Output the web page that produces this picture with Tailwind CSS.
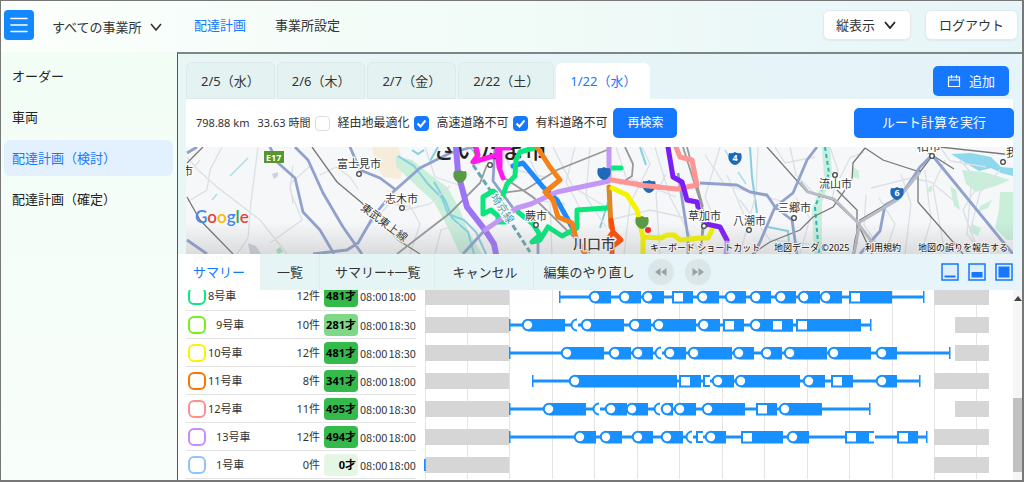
<!DOCTYPE html>
<html lang="ja">
<head>
<meta charset="utf-8">
<title>配達計画</title>
<script src="https://cdn.jsdelivr.net/npm/@tailwindcss/browser@4"></script>
</head>
<body class="font-['Noto_Sans','Noto_Sans_CJK_JP',sans-serif] text-[13px] leading-5 text-[#333]">
<div class="flex h-screen flex-col overflow-hidden border border-r-2 border-b-2 border-[#777] bg-linear-to-br from-[#fafffb] from-0% via-[#effaf5] via-40% to-[#e4f3fb]">

  <header class="flex h-[51px] shrink-0 items-center bg-linear-to-r from-[#fbfffc] via-[#f1fbf7] to-[#e6f5f9] pr-1 pb-1 pl-[3px] shadow-sm">
    <button aria-label="メニュー" class="grid size-[30px] place-items-center rounded bg-[#1488ff]">
      <svg viewBox="0 0 18 18" class="size-[18px]" stroke="#fff" stroke-width="1.6" stroke-linecap="round"><path d="M1 2.5h16M1 9h16M1 15.5h16"/></svg>
    </button>
    <label class="ml-[18px] grid items-center pt-1">
      <select aria-label="事業所" class="col-start-1 row-start-1 w-[110px] appearance-none bg-transparent outline-none">
        <option>すべての事業所</option>
      </select>
      <svg viewBox="0 0 12 8" class="pointer-events-none col-start-1 row-start-1 h-2 w-3 justify-self-end" fill="none" stroke="#333" stroke-width="1.6"><path d="M1 1l5 6 5-6"/></svg>
    </label>
    <nav class="ml-8 flex gap-[29px]">
      <a href="#" class="text-[#1677ff]">配達計画</a>
      <a href="#">事業所設定</a>
    </nav>
    <div class="ml-auto flex gap-[14px]">
      <label class="grid items-center rounded-md border border-[#e4eaea] bg-white shadow-xs">
        <select aria-label="表示" class="col-start-1 row-start-1 h-7 w-[86px] appearance-none bg-transparent pl-3 outline-none">
          <option>縦表示</option>
        </select>
        <svg viewBox="0 0 12 8" class="pointer-events-none col-start-1 row-start-1 mr-3.5 h-2 w-3 justify-self-end" fill="none" stroke="#222" stroke-width="1.8"><path d="M1 1l5 6 5-6"/></svg>
      </label>
      <button class="h-[30px] rounded-md border border-[#e4eaea] bg-white px-[13px] shadow-xs">ログアウト</button>
    </div>
  </header>

  <div class="flex min-h-0 flex-1">
    <nav class="flex w-44 shrink-0 flex-col gap-[5px] bg-linear-to-b from-[#f2fdf6] to-[#f8fefa] pt-1.5 pr-1 pl-[3px] text-[#222]">
      <a href="#" class="rounded-md px-2 py-2">オーダー</a>
      <a href="#" class="rounded-md px-2 py-2">車両</a>
      <a href="#" class="rounded-md bg-[#e3f1ff] px-2 py-2 text-[#1677ff]">配達計画（検討）</a>
      <a href="#" class="rounded-md px-2 py-2">配達計画（確定）</a>
    </nav>

    <main class="flex min-w-0 flex-1 flex-col border-t-2 border-l border-t-[#7b8786] border-l-[#555] bg-linear-to-r from-[#e8f6f5] to-[#e5f3fa]">
      <div class="flex h-[45px] shrink-0 items-end gap-0.5 pr-[13px] pl-2">
        <button class="h-[37px] rounded-t-md border border-[#dcebea] bg-[#e4f2f2] px-[14px]">2/5（水）</button>
        <button class="h-[37px] rounded-t-md border border-[#dcebea] bg-[#e4f2f2] px-[14px]">2/6（木）</button>
        <button class="h-[37px] rounded-t-md border border-[#dcebea] bg-[#e4f2f2] px-[14px]">2/7（金）</button>
        <button class="h-[37px] rounded-t-md border border-[#dcebea] bg-[#e4f2f2] px-[14px]">2/22（土）</button>
        <button class="h-[36px] rounded-t-md bg-white px-[14px] text-[#1677ff]">1/22（水）</button>
        <button class="mb-[3px] ml-auto flex h-[30px] items-center gap-2 rounded-[5px] bg-[#1677ff] px-[14px] text-white">
          <svg viewBox="0 0 14 14" class="size-[14px]" fill="none" stroke="#fff" stroke-width="1.2"><path d="M1.5 3h11v9.500h-11zM1.500 6h11M4.500 1v3.500M9.500 1v3.500"/></svg>追加
        </button>
      </div>

      <div class="mr-[9px] ml-2 flex h-12 shrink-0 items-center bg-white pl-[10px] text-xs text-[#333]">
        <span class="text-[11px] whitespace-nowrap">798.88 km</span>
        <span class="ml-2 text-[11px] whitespace-nowrap">33.63 時間</span>
        <label class="ml-[5px] flex items-center gap-[7px] whitespace-nowrap">
          <input type="checkbox" class="size-[15px] appearance-none rounded border border-[#ddd] bg-white">経由地最適化
        </label>
        <label class="ml-[5px] flex items-center gap-[7px] whitespace-nowrap">
          <span class="grid">
            <input type="checkbox" checked class="col-start-1 row-start-1 size-[15px] appearance-none rounded bg-[#1677ff]">
            <svg viewBox="0 0 15 15" class="pointer-events-none col-start-1 row-start-1 size-[15px]" fill="none" stroke="#fff" stroke-width="2"><path d="M3.500 7.500l3 3 5-6"/></svg>
          </span>高速道路不可
        </label>
        <label class="ml-[5px] flex items-center gap-[7px] whitespace-nowrap">
          <span class="grid">
            <input type="checkbox" checked class="col-start-1 row-start-1 size-[15px] appearance-none rounded bg-[#1677ff]">
            <svg viewBox="0 0 15 15" class="pointer-events-none col-start-1 row-start-1 size-[15px]" fill="none" stroke="#fff" stroke-width="2"><path d="M3.500 7.500l3 3 5-6"/></svg>
          </span>有料道路不可
        </label>
        <button class="ml-[6px] h-[30px] rounded-[5px] bg-[#1677ff] px-[14px] whitespace-nowrap text-white">再検索</button>
        <button class="-mr-px ml-auto h-[30px] rounded-[5px] bg-[#1677ff] px-7 text-[13px] whitespace-nowrap text-white">ルート計算を実行</button>
      </div>

      <svg viewBox="186 147 827 107" preserveAspectRatio="xMidYMid slice" class="ml-2 h-[107px] w-[calc(100%-17px)] shrink-0 bg-[#f6f7f8]" role="img" aria-label="地図" font-size="11" fill="#333">
        <defs>
          <linearGradient id="fade" x1="0" y1="0" x2="0" y2="1"><stop offset="0" stop-color="#888" stop-opacity="0"/><stop offset="1" stop-color="#888" stop-opacity=".25"/></linearGradient>
          <path id="shield" d="M-6-5q3 1 6-1q3 2 6 1q2 6-2 10q-2 2-4 2t-4-2q-4-4-2-10z"/>
        </defs>
        <!-- parks, built-up areas and water -->
        <path fill="#f6ecd9" d="M372 147h26l6 16-4 16-16-2-8-10zM386 190l14 4 8 14-12-2z"/>
        <path fill="#c9efdb" d="M396 156l16 4 20 16 16 12 12 22 8 20 14 24h-22l-12-26-14-26-24-22-14-14zM822 147h8l2 26-10 30 0 51h-8l-2-44 12-34zM853 167l6 4v8l-6-2zM962 170l22 2 26 8-14 6-20 6-10-8zM1000 192h13v48h-6l-12-12 4-18zM980 206l12-6-4 8-10 4zM950 186l6 4 4 20-6-4zM928 188l4-3v6l-4 2zM972 224l9 4-3 8-7-4z"/>
        <path fill="#8fd8ee" d="M951 154l20-1 20 4 10 10 12 1v8l-12-3-10-5-12 3-10-6z"/>
        <g fill="none" stroke="#84cfe0" stroke-width="2">
          <path d="M398 156l16 10 14 18 14 14 6 16 16 6 12 12 10 22M434 182l12 20 6 16 16 14 6 22M438 147l-8 14M470 147l8 10M750 147l2 30 5 36M640 147l6 18M600 228l8-26M768 227l20 4 2 23M412 150l6 4 6-4"/>
        </g>
        <path fill="none" stroke="#22b6c4" stroke-width="2" stroke-dasharray="4 3" d="M825 147l4 26-14 34 4 47"/>
        <path fill="#cdd3dc" d="M272 174l6-2v4l-4 3zM248 243l8 3 5 8h-11z"/>
        <path fill="#9fe8c0" d="M276 250l4-3 3 5-5 2z"/>
        <!-- minor roads -->
        <g fill="none" stroke="#dbe0e6" stroke-width="1.3">
          <path d="M258 147l-7 55-3 36-11 16M187 157l10 12 20 18 43 33 27 34M222 147l-12 23-3 20-20 12M293 165l-3 25 12 30-32 23M310 166l-20 18 3 20M320 175l16-8 14 10 8 12M200 160l-13 16M370 225l20-22 20 4M405 210l25-6 20-18M425 147l10 30 30 10M410 254l10-30-12-22M435 254l6-24 18-6M500 147l12 22 32 8M530 160l20 40 2 54M553 147l20 40 33 20M575 147l-9 35 16 30M590 147l-4 50 20 30M616 147l10 30 50 20M624 254l6-50 20-40-8-17M655 147l15 50 30 57M660 254l-4-60 10-20M720 147l-15 50 25 57M705 155l20 30 70 20M727 175l18 42 15 10M740 254l16-60 2-47M775 147l10 16 30-6M790 147l6 28 20 20M800 254l10-36-14-20M830 147l8 24-6 28M840 178l10-20 14-6M866 195l-2 30 20 29M871 188l40-10 20 4 22 18M885 254l10-30-16-26M905 254l6-50-10-30M925 170l6 50-10 34M945 160l-12 26 12 68M960 160l12 14-5 60 15 20M975 190l-12 20 16 44M1000 170l-20 22-10 40M940 147l10 14 36 6M515 185l20 15 30 4M610 220l40-10 45 10M740 200l30 40 40 4"/>
        </g>
        <path fill="none" stroke="#a9dfe5" stroke-width="1.5" d="M248 158l-18 18M217 194l-5 6M725 150l8 14M738 172l8 12"/>
        <!-- railways -->
        <g fill="none" stroke="#777" stroke-width="1.3">
          <path d="M312 147l25 35 25 21 36 37 22 14M187 197l13 23 33 34M203 147l-16 16M767 147l40 45 26 8 24 22 15 32M865 148l18 12 37 12 12-16M865 148l-12 15-1 17-19 27-20 10-13 13-30 12-18 12M918 173v29l35 40 10 12M920 170l-23 28-37 22-5 20-2 14M837 190l20 20v34M918 147l14 8 22 14M940 147l73 8"/>
        </g>
        <g fill="none" stroke="#999" stroke-width="1.800">
          <path d="M607 150l-50 20-32 20-25 3M503 177l30 20 57 56M487 165l-7 18-30 30-53 41M625 147l8 17-1 12-12 8M683 147l12 38 8 25-2 44M700 254l4-28M687 147l16 60"/>
        </g>
        <!-- highways -->
        <g fill="none" stroke="#90a1cd" stroke-width="2.800" stroke-linejoin="round">
          <path d="M270 147l7 15 18 16 8 34 17 18 14 24M295 147l13 13 15 33 20 34 19 27M313 254l34-4 11-7 15-26 20-25 27-24 30-15 23-6M350 147l10 23 20 8 16 12M187 153l10-6M187 240l20 14M463 254l22-24 32-22M495 147l-2 34 20 27M538 254v-20M700 183l37 2 13 7 17 3 8 12 18-14 14-33 10-13M775 207l-15 35-6 12M775 207l17 13 5 34M678 173l10 64v17M1003 242l-71-87-12 12-20 30-15 8-5 26-20 23M1003 242l10 12"/>
        </g>
        <path fill="none" stroke="#b8bcc4" stroke-width="3" d="M800 182l8 10 26 7 23 23 15 20M920 172l-23 28-37 22-6 32"/>
        <path fill="none" stroke="#62a9b3" stroke-width="3" stroke-dasharray="6 3" d="M473 165l17 25 40 62"/>
        <text x="433" y="158" font-size="23" font-weight="500" fill="#222">さいたま市</text>
        <g fill="none" stroke-linejoin="round" stroke-linecap="round" stroke-width="5">
          <path stroke="#1e88ff" d="M513 166l10-3 20 24 14 13 15 27"/>
          <path stroke="#ff1bea" d="M476 147l2 8-5 7 14-4 10-3M497 149l2 18 4 11M500 150v18M501 148h8"/>
          <path stroke="#08e67c" d="M537 147l-17 5-4 8-1 16-8 8-5 14-9-7-10 6v17l8-4 7 6v6l10 0M518 212l15 12 7 11-8 7 8-2 8-13 14 9 15-8v-18l30-2M611 168h10"/>
          <path stroke="#9b74f7" stroke-width="6" d="M456 147l2 26 9 34 18 23 9 14 2 10"/>
          <path stroke="#c397f5" d="M485 230l32-22 14-4 26-12 52-11v-34"/>
          <path stroke="#f58119" d="M537 147l13 20 10 13-15 12 8 8 5 17 14 6 4 15 9 16"/>
          <path stroke="#d98a28" d="M609 187l2 40"/>
          <path stroke="#ff4b0a" d="M611 220l2 12-6 8 5 4v10M613 232l8 8-8 6"/>
          <path stroke="#f4f400" d="M612 188l15 7 10 15 6 27v17M643 237l18 1 6-3 7 0 6 5 20-2 8 0 4-8"/>
          <path stroke="#ff9494" d="M612 180l35 6 30 3 20-4-5-25-12-3-4-10"/>
          <path stroke="#7c1cf6" d="M668 147l5 30 9 5 5 18 10 2 2 10 8 1-1 11 14 3 7 13"/>
          <path stroke="#c397f5" d="M727 243l-1 11"/>
        </g>
        <circle cx="648" cy="230" r="3" fill="#f22"/>
        <!-- route shields -->
        <rect x="264" y="151" width="20" height="12" fill="#55962f"/>
        <text x="266" y="161" font-size="9" font-weight="700" fill="#fff">E17</text>
        <use href="#shield" x="460" y="176" fill="#5a9a45"/><use href="#shield" x="642" y="222" fill="#5a9a45"/>
        <g fill="#1f6ab8"><use href="#shield" x="735" y="158"/><use href="#shield" x="897" y="193"/><use href="#shield" x="604" y="173"/><use href="#shield" x="649" y="186"/></g>
        <path stroke="#ff9494" stroke-width="5" d="M638 185l22 2"/>
        <g font-size="9" font-weight="700" fill="#fff" text-anchor="middle"><text x="735" y="161">4</text><text x="897" y="196">6</text></g>
        <!-- places -->
        <g stroke="#fff" stroke-width="2.500" paint-order="stroke">
          <text x="337" y="168">富士見市</text><text x="385" y="203">志木市</text><text x="525" y="220">蕨市</text>
          <text x="573" y="249" font-size="14" font-weight="500">川口市</text>
          <text x="688" y="220">草加市</text><text x="733" y="225">八潮市</text><text x="778" y="212">三郷市</text><text x="819" y="188">流山市</text>
          <text x="917" y="151" font-size="12">柏市</text><text x="1006" y="157">我</text><text x="182" y="175">市</text>
          <text transform="translate(360 209) rotate(37)">東武東上線</text>
          <text transform="translate(490 197) rotate(56)" fill="#4f9aa6">埼京線</text>
        </g>
        <g fill="#fff" stroke="#444" stroke-width="1.300"><circle cx="359" cy="174" r="2.300"/><circle cx="402" cy="208" r="2.300"/><circle cx="536" cy="225" r="2.300"/><circle cx="490" cy="165" r="2.300"/><circle cx="704" cy="226" r="2.300"/><circle cx="749" cy="230" r="2.300"/><circle cx="794" cy="218" r="2.300"/><circle cx="835" cy="175" r="2.300"/><circle cx="932" cy="156" r="2.300"/><circle cx="1003" cy="162" r="2.300"/></g>
        <rect x="186" y="222" width="827" height="32" fill="url(#fade)"/>
        <text x="195" y="223" font-size="17" font-family="Lato" font-weight="600"><tspan fill="#4285f4">G</tspan><tspan fill="#ea4335">o</tspan><tspan fill="#fbbc05">o</tspan><tspan fill="#4285f4">g</tspan><tspan fill="#34a853">l</tspan><tspan fill="#ea4335">e</tspan></text>
        <g font-size="9" fill="#111" stroke="#eee" stroke-width="2" paint-order="stroke"><text x="650" y="251">キーボード ショートカット</text><text x="774" y="251">地図データ ©2025</text><text x="865" y="251">利用規約</text><text x="918" y="251">地図の誤りを報告する</text></g>
      </svg>

      <div class="flex h-9 shrink-0 items-center gap-px bg-linear-to-r from-[#e5f4f3] to-[#e7f5fb] pr-[9px] whitespace-nowrap">
        <button class="h-9 bg-white px-[15px] text-[#1677ff]">サマリー</button>
        <button class="h-9 border-r border-[#dcecec] px-4">一覧</button>
        <button class="h-9 border-r border-[#dcecec] px-[14px]">サマリー+一覧</button>
        <button class="h-9 rounded-tr-lg border-r border-[#dcecec] px-4">キャンセル</button>
        <span class="ml-2">編集のやり直し</span>
        <button aria-label="元に戻す" class="ml-3 grid size-[26px] place-items-center rounded-full bg-[#dae6e7]">
          <svg viewBox="0 0 12 8" class="h-2 w-3" fill="#98a3a4"><path d="M5.500 0v8L0 4zM11.500 0v8L6 4z"/></svg>
        </button>
        <button aria-label="やり直す" class="ml-2.5 grid size-[26px] place-items-center rounded-full bg-[#dae6e7]">
          <svg viewBox="0 0 12 8" class="h-2 w-3" fill="#98a3a4"><path d="M.5 0v8L6 4zM6.500 0v8L12 4z"/></svg>
        </button>
        <div class="ml-auto flex gap-[9px]">
          <button aria-label="最小化"><svg viewBox="0 0 18 18" class="size-[18px]" fill="#1677ff"><rect x="1" y="1" width="16" height="16" fill="#deeefd" stroke="#1677ff" stroke-width="1.500"/><path d="M3.500 12.500h11v2h-11z"/></svg></button>
          <button aria-label="半分表示"><svg viewBox="0 0 18 18" class="size-[18px]" fill="#1677ff"><rect x="1" y="1" width="16" height="16" fill="#deeefd" stroke="#1677ff" stroke-width="1.500"/><path d="M3.500 9h11v5.500h-11z"/></svg></button>
          <button aria-label="最大化"><svg viewBox="0 0 18 18" class="size-[18px]" fill="#1677ff"><rect x="1" y="1" width="16" height="16" fill="#deeefd" stroke="#1677ff" stroke-width="1.500"/><path d="M3.500 3.500h11v11h-11z"/></svg></button>
        </div>
      </div>

      <div class="flex min-h-0 flex-1 bg-white pl-2">
        <div class="flex min-w-0 flex-1 flex-col justify-end overflow-hidden pb-px">
          <table class="w-full table-fixed border-collapse text-[11px] leading-4 whitespace-nowrap">
            <colgroup><col class="w-[22px]"><col class="w-[76px]"><col class="w-[38px]"><col class="w-[38px]"><col class="w-[56px]"><col></colgroup>
            <tbody id="rows"></tbody>
          </table>
        </div>
        <div class="flex w-[9px] flex-col items-center justify-between bg-[#f6f6f6]">
          <svg viewBox="0 0 8 5" class="mt-1.5 h-[5px] w-2" fill="#444"><path d="M4 0l4 5H0z"/></svg>
          <div class="mt-auto mb-2 h-[74px] w-full bg-[#c1c1c1]"></div>
        </div>
      </div>
    </main>
  </div>
</div>

<template id="row">
  <tr>
    <td class="h-7 border-b border-[#e3e3e3] p-0 pl-0.5"><input type="checkbox" class="block size-[18px] appearance-none rounded-[6px] border-2 bg-white"></td>
    <td class="border-b border-[#e3e3e3] p-0"></td>
    <td class="border-b border-[#e3e3e3] p-0 pr-0.5 text-right"></td>
    <td class="border-b border-[#e3e3e3] p-0 pl-0.5"><span class="block w-[34px] rounded py-[3px] pr-0.5 text-right font-bold text-black"></span></td>
    <td class="border-b border-[#e3e3e3] p-0 font-['Noto_Sans_CJK_JP',sans-serif]"><span class="flex gap-px"></span></td>
    <td class="h-7 p-0"><svg viewBox="416 0 597 28" preserveAspectRatio="xMinYMid slice" class="block h-7 w-full"></svg></td>
  </tr>
</template>
<script>
// Stops: c = circle, s = square, p = short round stop, q = short square stop; [kind, x, bar end]
const vehicles = [
  {n:'8号車', color:'#0be881', k:12, w:481, bg:'#34b94b', e:'18:00', from:560, to:924, off:934, stops:[['c',595,611],['c',625,641],['c',648,664],['s',678,693],['c',703,719],['c',731,746],['c',756,771],['c',781,796],['c',804,820],['c',826,842],['s',855,892]]},
  {n:'9号車', indent:1, color:'#7bed1c', k:10, w:281, bg:'#7fd888', e:'18:30', from:510, to:871, off:955, stops:[['c',528,565],['p',575],['c',587,624],['c',635,651],['c',659,696],['c',704,720],['s',729,744],['c',756,793],['s',777,793],['s',802,861]]},
  {n:'10号車', color:'#fff200', k:12, w:481, bg:'#34b94b', e:'18:30', from:510, to:950, off:955, stops:[['c',567,604],['c',615,631],['c',638,653],['p',659],['c',670,686],['c',694,732],['c',739,754],['c',767,782],['c',790,827],['c',834,871],['c',882,897]]},
  {n:'11号車', color:'#ff7300', k:8, w:341, bg:'#34b94b', e:'18:00', from:533, to:920, off:934, stops:[['c',575,677],['s',685,701],['q',708],['c',718,734],['c',741,800],['c',809,825],['s',837,853],['c',882,897]]},
  {n:'12号車', color:'#ff8f8f', k:11, w:495, bg:'#34b94b', e:'18:30', from:510, to:870, off:955, stops:[['c',549,586],['p',597],['c',611,627],['c',632,648],['p',658],['c',667,673],['c',680,696],['c',708,745],['s',762,777],['c',785,822]]},
  {n:'13号車', indent:1, color:'#c58cff', k:12, w:494, bg:'#34b94b', e:'18:00', from:510, to:927, off:934, stops:[['c',580,596],['c',606,622],['c',638,653],['c',667,683],['p',690],['q',701],['c',711,726],['s',747,783],['c',793,809],['s',851,874],['n',873],['s',903,918]]},
  {n:'1号車', indent:1, color:'#8cc4ff', k:0, w:0, bg:'#e6f6e4', e:'18:00', from:425, to:425, off:934, stops:[]}
];
const blue = '#1890ff';
function chart(v) {
  let s = '';
  for (let i = 0; i < 14; i++) s += `<rect x="${Math.round(424.500 + i * 42.460)}" y="0" width="1" height="28" fill="#e4e4e4"/>`;
  s += `<rect x="425" y="6" width="84" height="16" fill="#d6d6d6"/><rect x="${v.off}" y="6" width="${989 - v.off}" height="16" fill="#d6d6d6"/>`;
  s += `<rect x="${v.from}" y="12.500" width="${v.to - v.from}" height="3" fill="${blue}"/>`;
  s += `<rect x="${v.from - 1}" y="8" width="1.500" height="12" fill="${blue}"/><rect x="${v.to - 1}" y="8" width="1.500" height="12" fill="${blue}"/>`;
  for (const [t, x, end] of v.stops)
    if (end) s += `<rect x="${t === 's' ? x - 6 : x}" y="8" width="${end - x + (t === 's' ? 6 : 0)}" height="12.500" fill="${blue}"/>`;
  for (const [t, x] of v.stops) {
    if (t === 'c') s += `<circle cx="${x}" cy="14" r="5.200" fill="#fff" stroke="${blue}" stroke-width="2"/>`;
    if (t === 's') s += `<rect x="${x - 4}" y="10" width="9" height="8.500" fill="#fff"/>`;
    if (t === 'p') s += `<path d="M${x + 1} 8v12h2v-12z" fill="#fff"/><path d="M${x + 2} 8.500a5.500 5.500 0 0 0 0 11" fill="#fff" stroke="${blue}" stroke-width="2"/>`;
    if (t === 'q') s += `<path d="M${x + 2} 9h-6v10h6" fill="#fff" stroke="${blue}" stroke-width="2"/>`;
    if (t === 'n') s += `<rect x="${x - 4}" y="10" width="6" height="8.500" fill="#fff"/>`;
  }
  return s;
}
const tpl = document.getElementById('row');
for (const v of vehicles) {
  const tr = tpl.content.cloneNode(true), td = tr.querySelectorAll('td');
  const box = td[0].firstElementChild;
  box.style.borderColor = v.color;
  box.id = 'v' + v.n;
  const name = document.createElement('label');
  name.htmlFor = box.id;
  name.textContent = v.n;
  if (v.indent) name.className = 'pl-2';
  td[1].append(name);
  td[2].textContent = v.k + '件';
  td[3].firstElementChild.textContent = v.w + '才';
  td[3].firstElementChild.style.background = v.bg;
  td[4].firstElementChild.innerHTML = `<span>08:00</span><span>${v.e}</span>`;
  td[5].firstElementChild.innerHTML = chart(v);
  document.getElementById('rows').append(tr);
}
</script>
</body>
</html>
